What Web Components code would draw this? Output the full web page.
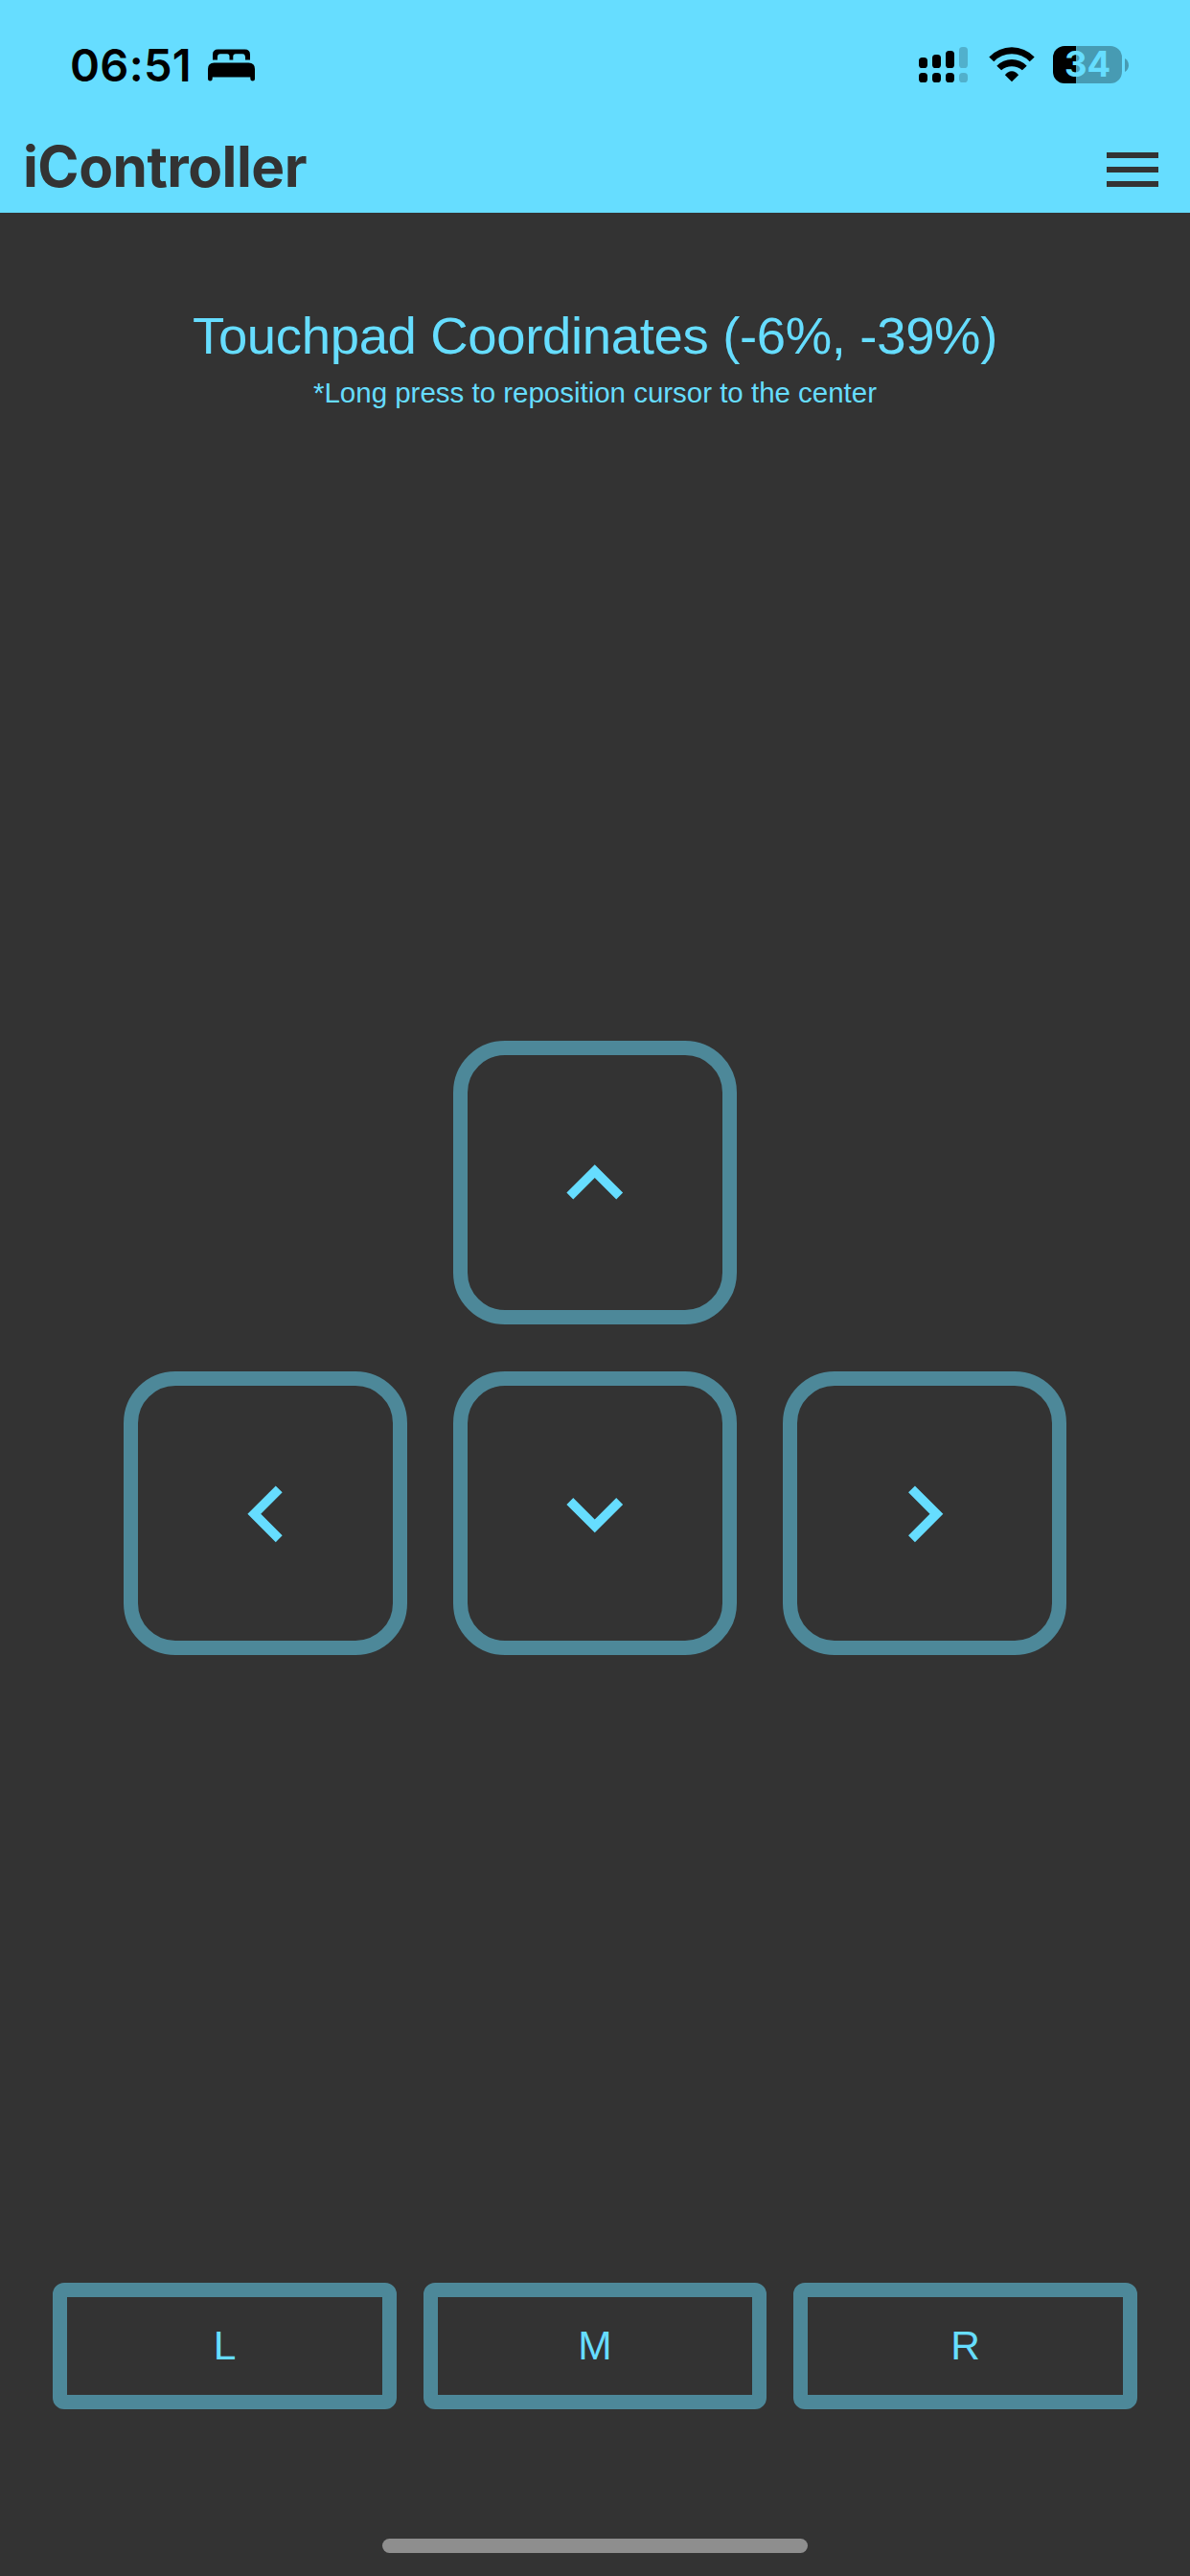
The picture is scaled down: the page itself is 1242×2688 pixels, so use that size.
<!DOCTYPE html>
<html lang="en">
<head>
<meta charset="utf-8">
<title>iController</title>
<style>
  html, body { margin: 0; background: #333; }
  body { width: 1242px; height: 2688px; overflow: hidden; }
</style>
</head>
<body>
<controller-app></controller-app>
<script>
  const define = (name, html, setup) => {
    const tpl = document.createElement('template');
    tpl.innerHTML = html;
    customElements.define(name, class extends HTMLElement {
      connectedCallback() {
        if (this.shadowRoot) return;
        this.attachShadow({ mode: 'open' }).appendChild(tpl.content.cloneNode(true));
        if (setup) setup(this, this.shadowRoot);
      }
    });
  };

  define('signal-icon', `
    <style>:host, svg { display: block; }</style>
    <svg width="51" height="37" viewBox="0 0 51 37">
      <rect x="0" y="11" width="9" height="11" rx="3.6"/><rect x="14" y="8" width="9" height="14" rx="3.6"/>
      <rect x="28" y="4" width="9" height="18" rx="3.6"/><rect x="42" y="0" width="9" height="22" rx="3.6" opacity=".2"/>
      <rect x="0" y="27" width="9" height="10" rx="3.6"/><rect x="14" y="27" width="9" height="10" rx="3.6"/>
      <rect x="28" y="27" width="9" height="10" rx="3.6"/><rect x="42" y="27" width="9" height="10" rx="3.6" opacity=".2"/>
    </svg>`);

  define('wifi-icon', `
    <style>:host, svg { display: block; }</style>
    <svg width="48" height="37" viewBox="0 0 48 37">
      <path d="M.3 10.4A33 33 0 0 1 47.7 10.4L42.7 15.2A26 26 0 0 0 5.3 15.2Z"/>
      <path d="M8.3 19.7A21.7 21.7 0 0 1 39.7 19.7L34.9 24.3A17 17 0 0 0 13.1 24.3Z"/>
      <path d="M16.9 29.2A8.5 8.5 0 0 1 31.1 29.2L24 36.3Z"/>
    </svg>`);

  define('bed-icon', `
    <style>:host, svg { display: block; }</style>
    <svg width="49" height="34" viewBox="0 0 49 34">
      <path d="M5 11.5V6Q5 .5 10.500 .5H38.500Q44 .5 44 6V11.500H39V8.500Q39 5.300 36 5.300H29Q26.300 5.300 26.300 8V11.500H22.500V8Q22.500 5.300 20 5.300H13Q10 5.300 10 8.500V11.500Z"/>
      <path d="M0 21Q0 14.500 6.500 14.500H42.500Q49 14.500 49 21V31.300Q49 33.500 46.800 33.500Q44.300 33.500 44.300 31.300V29.500H4.700V31.300Q4.700 33.500 2.300 33.500Q0 33.500 0 31.300Z"/>
    </svg>`);

  /* One line of text, tracked so that its advance equals the "span" attribute. */
  define('tracked-text', `
    <style>:host { display: block; white-space: nowrap; } span { display: inline-block; }</style>
    <span><slot></slot></span>`, (host, root) => {
    const span = root.querySelector('span');
    const natural = span.getBoundingClientRect().width;
    const count = host.textContent.length || 11;
    span.style.letterSpacing = ((Number(host.getAttribute('span')) - natural) / count).toFixed(4) + 'px';
  });

  define('battery-icon', `
    <style>
      :host { display: flex; align-items: center; gap: 3px; }
      .cell { width: 72px; height: 39px; border-radius: 12px; display: flex; align-items: center; justify-content: center;
        background: linear-gradient(90deg, #000 24px, #479bb3 24px); color: #6df;
        font: 700 36.5px/39px Inter, sans-serif; }
      svg { display: block; }
    </style>
    <div class="cell"><tracked-text span="48">34</tracked-text></div>
    <svg width="4" height="14" viewBox="0 0 4 14"><path d="M0 0C5.3 3 5.3 11 0 14Z" fill="#479bb3"/></svg>`);

  define('status-bar', `
    <style>
      :host { display: flex; align-items: center; height: 135px; padding: 0 64px 0 73px; color: #000; }
      .time { font: 600 47px/60px Inter, sans-serif; }
      bed-icon { margin-left: 17px; }
      signal-icon { margin-left: auto; }
      wifi-icon { margin-left: 22px; }
      battery-icon { margin-left: 19px; }
    </style>
    <tracked-text class="time" span="127">06:51</tracked-text>
    <bed-icon></bed-icon>
    <signal-icon></signal-icon><wifi-icon></wifi-icon><battery-icon></battery-icon>`);

  define('nav-bar', `
    <style>
      :host { display: flex; align-items: center; justify-content: space-between; height: 78px; padding: 0 33px 9px 24px; color: #333; }
      .title { font: 700 58.500px/70px Inter, sans-serif; }
      .menu { display: flex; flex-direction: column; gap: 9px; padding-top: 6px; }
      .menu i { width: 54px; height: 6px; background: #333; }
    </style>
    <tracked-text class="title" span="296">iController</tracked-text>
    <div class="menu"><i></i><i></i><i></i></div>`);

  const CHEVRONS = {
    up: 'M12 8l-6 6 1.41 1.41L12 10.83l4.59 4.58L18 14z',
    down: 'M16.59 8.59L12 13.17 7.41 8.59 6 10l6 6 6-6z',
    left: 'M15.66 7.41L14.25 6l-6 6 6 6 1.41-1.41L11.08 12z',
    right: 'M10 6L8.59 7.41 13.17 12l-4.58 4.590L10 18l6-6z'
  };
  define('pad-key', `
    <style>
      :host { display: flex; align-items: center; justify-content: center; box-sizing: border-box;
        width: 296px; height: 296px; border: 15px solid #4d8899; border-radius: 54px; }
      svg { display: block; fill: #6df; margin-top: 1px; }
    </style>
    <svg width="117.500" height="117.500" viewBox="0 0 24 24"><path/></svg>`, (host, root) => {
    root.querySelector('path').setAttribute('d', CHEVRONS[host.getAttribute('direction')]);
  });

  define('direction-pad', `
    <style>
      :host { display: flex; flex-direction: column; align-items: center; gap: 49px; }
      div { display: flex; gap: 48px; }
    </style>
    <pad-key direction="up"></pad-key>
    <div><pad-key direction="left"></pad-key><pad-key direction="down"></pad-key><pad-key direction="right"></pad-key></div>`);

  define('mouse-button', `
    <style>
      :host { display: flex; align-items: center; justify-content: center; box-sizing: border-box;
        height: 132px; border: 15px solid #4d8899; border-radius: 12px;
        font: 42.500px/50px "Liberation Sans", Arial, sans-serif; color: #6df; }
    </style>
    <slot></slot>`);

  define('touch-info', `
    <style>
      :host { display: flex; flex-direction: column; align-items: center; color: #6df;
        font-family: "Liberation Sans", Arial, sans-serif; }
      .main { font-size: 54.500px; line-height: 62px; }
      .hint { font-size: 29.500px; line-height: 36px; margin-top: 10px; }
    </style>
    <tracked-text class="main" span="840">Touchpad Coordinates (-6%, -39%)</tracked-text>
    <tracked-text class="hint" span="588">*Long press to reposition cursor to the center</tracked-text>`);

  define('controller-app', `
    <style>
      :host { display: flex; flex-direction: column; width: 1242px; height: 2688px; background: #333; }
      header { height: 222px; background: #6df; }
      touch-info { margin-top: 98px; }
      direction-pad { margin-top: 658px; }
      .buttons { display: grid; grid-template-columns: 359px 358px 359px; gap: 28px; margin: 655px 55px 0; }
      .home { width: 444px; height: 15px; border-radius: 7.500px; background: #8e8e8e; margin: 135px auto 0; }
    </style>
    <header><status-bar></status-bar><nav-bar></nav-bar></header>
    <touch-info></touch-info>
    <direction-pad></direction-pad>
    <div class="buttons"><mouse-button>L</mouse-button><mouse-button>M</mouse-button><mouse-button>R</mouse-button></div>
    <div class="home"></div>`);
</script>
</body>
</html>
